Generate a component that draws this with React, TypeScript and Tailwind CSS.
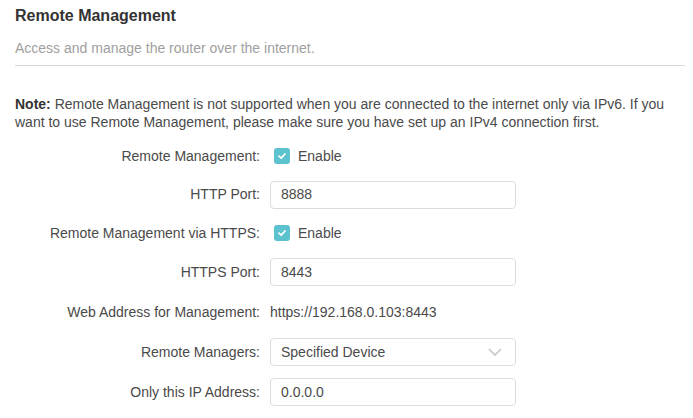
import React from "react";

const font = { fontFamily: '"Liberation Sans", Arial, sans-serif' };

function Check() {
  return (
    <span className="flex h-4 w-4 items-center justify-center rounded-[3px] bg-[#5bc2ce]">
      <svg width="10" height="10" viewBox="0 0 10 10" fill="none">
        <path d="M2 5.2 L4.2 7.2 L8 3" stroke="#fff" strokeWidth="1.8" strokeLinecap="round" strokeLinejoin="round" />
      </svg>
    </span>
  );
}

function Row({ label, children, h }: { label: string; children: React.ReactNode; h: string }) {
  return (
    <div className={`flex items-center ${h}`}>
      <div className="w-[245px] text-right text-[14px] text-[#4a4a4a]">{label}</div>
      <div className="ml-[10px] flex items-center">{children}</div>
    </div>
  );
}

function Input({ value, select }: { value: string; select?: boolean }) {
  return (
    <div className="flex h-[28px] w-[246px] items-center justify-between rounded-[4px] border border-[#dcdcdc] bg-white px-[10px] text-[14px] text-[#4a4a4a]">
      <span>{value}</span>
      {select && (
        <svg width="16" height="10" viewBox="0 0 16 10" fill="none" className="mr-[2px]">
          <path d="M2 2 L8 8 L14 2" stroke="#c8c8c8" strokeWidth="1.6" />
        </svg>
      )}
    </div>
  );
}

export default function App() {
  return (
    <div className="w-[693px] h-[418px] bg-white overflow-hidden" style={font}>
      <div className="pl-[15px] pr-[8px]">
        <h1 className="pt-[4px] text-[16px] leading-[24px] font-bold text-[#333]">Remote Management</h1>
        <p className="mt-[10px] text-[14px] leading-[21px] text-[#a0a0a0]">Access and manage the router over the internet.</p>
        <div className="mt-[6px] h-px bg-[#d9d9d9]" />
        <p className="mt-[29px] text-[14px] leading-[18px] text-[#4a4a4a]">
          <b className="text-[#333]">Note:</b> Remote Management is not supported when you are connected to the internet only via IPv6. If you want to use Remote Management, please make sure you have set up an IPv4 connection first.
        </p>
        <div className="mt-[6px]">
          <Row label="Remote Management:" h="h-[38px]">
            <span className="ml-[4px]"><Check /></span>
            <span className="ml-[8px] text-[14px] text-[#4a4a4a]">Enable</span>
          </Row>
          <Row label="HTTP Port:" h="h-[39px]">
            <Input value="8888" />
          </Row>
          <Row label="Remote Management via HTTPS:" h="h-[38px]">
            <span className="ml-[4px]"><Check /></span>
            <span className="ml-[8px] text-[14px] text-[#4a4a4a]">Enable</span>
          </Row>
          <Row label="HTTPS Port:" h="h-[40px]">
            <Input value="8443" />
          </Row>
          <Row label="Web Address for Management:" h="h-[40px]">
            <span className="text-[14px] text-[#4a4a4a]">https://192.168.0.103:8443</span>
          </Row>
          <Row label="Remote Managers:" h="h-[40px]">
            <Input value="Specified Device" select />
          </Row>
          <Row label="Only this IP Address:" h="h-[40px]">
            <Input value="0.0.0.0" />
          </Row>
        </div>
      </div>
    </div>
  );
}
